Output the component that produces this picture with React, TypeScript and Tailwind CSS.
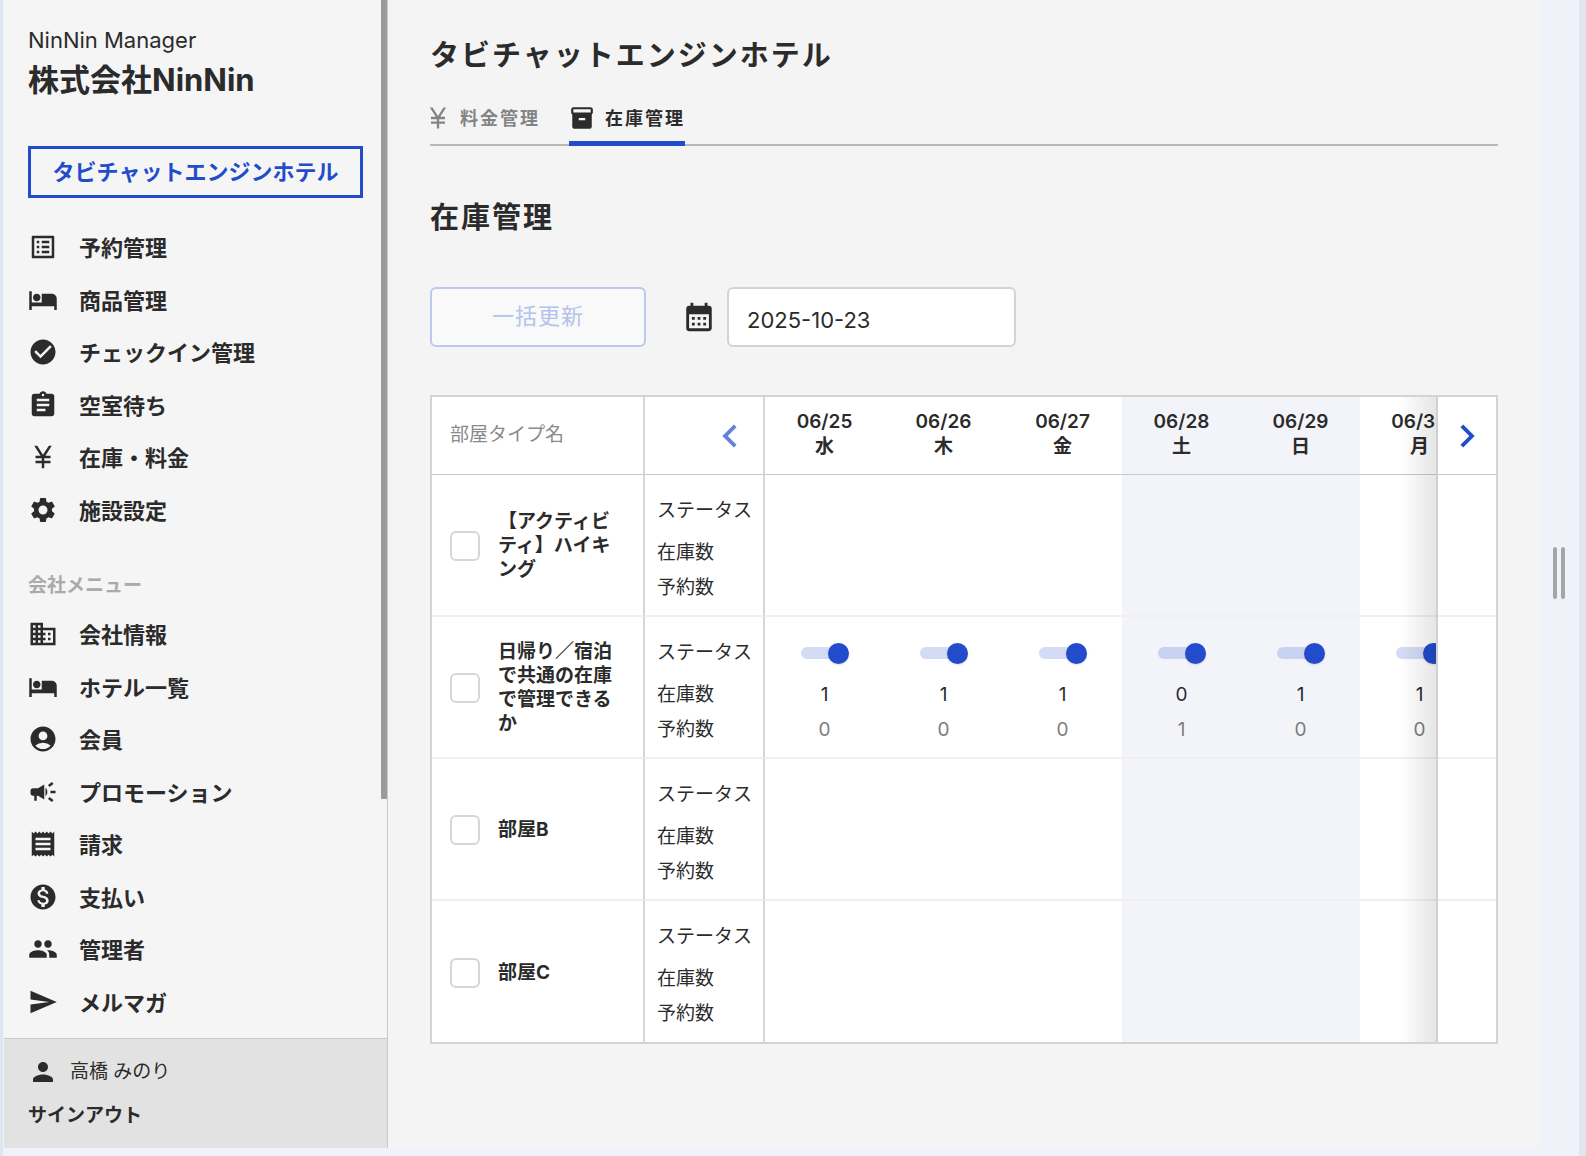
import React, { useState } from 'react';
import type { IconType } from 'react-icons';
import {
  MdListAlt,
  MdHotel,
  MdCheckCircle,
  MdAssignment,
  MdCurrencyYen,
  MdSettings,
  MdBusiness,
  MdAccountCircle,
  MdCampaign,
  MdReceipt,
  MdMonetizationOn,
  MdPeople,
  MdSend,
  MdPerson,
  MdInventory2,
  MdCalendarMonth,
  MdChevronLeft,
  MdChevronRight,
} from 'react-icons/md';

type MenuItem = { label: string; icon: IconType };

type Day = { date: string; weekday: string; weekend?: boolean };

type Stock = { open: boolean; stock: number; reserved: number };

type Room = { id: string; name: string; days?: Stock[] };

const hotelMenu: MenuItem[] = [
  { label: '予約管理', icon: MdListAlt },
  { label: '商品管理', icon: MdHotel },
  { label: 'チェックイン管理', icon: MdCheckCircle },
  { label: '空室待ち', icon: MdAssignment },
  { label: '在庫・料金', icon: MdCurrencyYen },
  { label: '施設設定', icon: MdSettings },
];

const companyMenu: MenuItem[] = [
  { label: '会社情報', icon: MdBusiness },
  { label: 'ホテル一覧', icon: MdHotel },
  { label: '会員', icon: MdAccountCircle },
  { label: 'プロモーション', icon: MdCampaign },
  { label: '請求', icon: MdReceipt },
  { label: '支払い', icon: MdMonetizationOn },
  { label: '管理者', icon: MdPeople },
  { label: 'メルマガ', icon: MdSend },
];

const days: Day[] = [
  { date: '06/25', weekday: '水' },
  { date: '06/26', weekday: '木' },
  { date: '06/27', weekday: '金' },
  { date: '06/28', weekday: '土', weekend: true },
  { date: '06/29', weekday: '日', weekend: true },
  { date: '06/30', weekday: '月' },
];

const rooms: Room[] = [
  { id: 'hiking', name: '【アクティビティ】ハイキング' },
  {
    id: 'shared',
    name: '日帰り／宿泊で共通の在庫で管理できるか',
    days: [
      { open: true, stock: 1, reserved: 0 },
      { open: true, stock: 1, reserved: 0 },
      { open: true, stock: 1, reserved: 0 },
      { open: true, stock: 0, reserved: 1 },
      { open: true, stock: 1, reserved: 0 },
      { open: true, stock: 1, reserved: 0 },
    ],
  },
  { id: 'room-b', name: '部屋B' },
  { id: 'room-c', name: '部屋C' },
];

const MenuLink = ({ label, icon: Icon }: MenuItem) => (
  <li className="flex items-center">
    <a href="#" className="flex items-center gap-[21px] text-[22px] leading-8 font-bold">
      <Icon size={30} className="shrink-0" />
      <span className="pt-0.5">{label}</span>
    </a>
  </li>
);

const StatusSwitch = ({ label, defaultOn }: { label: string; defaultOn: boolean }) => {
  const [on, setOn] = useState(defaultOn);

  return (
    <label className="relative inline-flex h-[21px] w-12 items-center align-middle cursor-pointer">
      <input
        type="checkbox"
        role="switch"
        aria-label={label}
        checked={on}
        onChange={() => setOn(!on)}
        className="peer sr-only"
      />
      <span className="h-3 w-full rounded-full bg-gray-300 peer-checked:bg-[#224ccc]/20"></span>
      <span className="absolute left-0 size-[21px] rounded-full bg-white shadow-sm peer-checked:left-auto peer-checked:right-0 peer-checked:bg-[#224ccc]"></span>
    </label>
  );
};

const Sidebar = () => (
  <aside className="flex w-96 shrink-0 flex-col border-r border-[#c9c9c9] bg-[#f5f5f5]">
    <div className="relative flex-1 min-h-0 overflow-hidden px-6 pt-[26px]">
      <p className="text-[22px] leading-7">NinNin Manager</p>
      <p className="mt-1.5 text-[31px] leading-10 font-bold">株式会社NinNin</p>

      <button className="mt-[46px] block h-[52px] w-[335px] border-3 border-[#224ccc] text-[22px] leading-8 font-bold text-[#224ccc]">
        タビチャットエンジンホテル
      </button>

      <ul className="mt-[23px] grid h-[315px] grid-rows-6">
        {hotelMenu.map(item => <MenuLink key={item.label} {...item} />)}
      </ul>

      <p className="mt-[34px] text-[19px] leading-8 font-bold text-[#aaaaaa]">会社メニュー</p>
      <ul className="mt-1.5 grid h-[420px] grid-rows-8">
        {companyMenu.map(item => <MenuLink key={item.label} {...item} />)}
      </ul>

      {/* Scroll thumb */}
      <div className="absolute top-0 right-0 h-[77%] w-1.5 bg-[#9b9b9b]"></div>
    </div>

    <div className="shrink-0 border-t border-[#c9c9c9] bg-[#e2e2e2] px-6 pt-[17px] pb-4">
      <p className="flex items-center gap-3 text-[19px] leading-8">
        <MdPerson size={30} />
        高橋 みのり
      </p>
      <button className="mt-3 block text-[19px] leading-8 font-bold">サインアウト</button>
    </div>
  </aside>
);

const Tabs = () => (
  <nav className="mt-3.5 border-b-2 border-[#b8b8b8]">
    <div className="-mb-0.5 -ml-1.5 flex gap-[29px] text-[18px] font-bold tracking-[2px]">
      <a href="#" className="flex h-14 items-center gap-2.5 border-b-5 border-transparent pt-[5px] text-[#848484]">
        <MdCurrencyYen size={28} className="-mr-0.5" />
        料金管理
      </a>
      <a href="#" aria-current="page" className="flex h-14 items-center gap-2.5 border-b-5 border-[#224ccc] pt-[5px]">
        <MdInventory2 size={26} />
        在庫管理
      </a>
    </div>
  </nav>
);

const RoomRow = ({ room, last }: { room: Room; last: boolean }) => {
  const line = last ? 'border-b-0' : 'border-b-2 border-b-[#f0f0f0]';

  return (
    <tr className={last ? 'h-[141px]' : 'h-[142px]'}>
      <th scope="row" className={`border-r-2 border-r-[#d6d6d6] px-[18px] pt-0.5 text-left font-bold ${line}`}>
        <label className="flex items-center gap-[18px] leading-6">
          <input
            type="checkbox"
            className="size-[30px] shrink-0 appearance-none rounded-md border-2 border-[#d6d6d6] bg-white checked:border-[#224ccc] checked:bg-[#224ccc]"
          />
          {room.name}
        </label>
      </th>
      <td className={`border-r-2 border-r-[#d6d6d6] pt-4 pl-3 align-top ${line}`}>
        <p className="mb-1 leading-10">ステータス</p>
        <p className="leading-[35px]">在庫数</p>
        <p className="leading-[35px]">予約数</p>
      </td>
      {days.map((day, i) => {
        const cell = room.days?.[i];
        return (
          <td key={day.date} className={`pt-4 text-center align-top ${line} ${day.weekend ? 'bg-[#f3f4fa]' : ''}`}>
            {cell && (
              <>
                <div className="mb-1 flex h-10 items-center justify-center">
                  <StatusSwitch label={`${room.name} ${day.date}`} defaultOn={cell.open} />
                </div>
                <p className="leading-[35px]">{cell.stock}</p>
                <p className="leading-[35px] text-[#7d7d7d]">{cell.reserved}</p>
              </>
            )}
          </td>
        );
      })}
    </tr>
  );
};

const StockTable = () => (
  <div className="mt-12 flex border-2 border-[#d3d3d3] bg-white">
    <div className="relative min-w-0 flex-1 overflow-hidden">
      <table className="w-[1047px] table-fixed border-separate border-spacing-0 text-[19px]">
        <colgroup>
          <col className="w-[213px]" />
          <col className="w-[120px]" />
          {days.map(day => <col key={day.date} className="w-[119px]" />)}
        </colgroup>
        <thead>
          <tr className="h-[78px]">
            <th scope="col" className="border-r-2 border-b border-r-[#d6d6d6] border-b-[#c9c9c9] px-[18px] text-left font-normal text-[#8a8a8a]">
              部屋タイプ名
            </th>
            <th className="border-r-2 border-b border-r-[#d6d6d6] border-b-[#c9c9c9]">
              <button aria-label="前へ" className="ml-auto mr-2.5 block text-[#224ccc]/70">
                <MdChevronLeft size={46} />
              </button>
            </th>
            {days.map(day => (
              <th
                key={day.date}
                scope="col"
                className={`border-b border-[#c9c9c9] pb-1 leading-[25px] ${day.weekend ? 'bg-[#f3f4fa]' : ''}`}
              >
                <span className="block font-semibold">{day.date}</span>
                <span className="block font-bold">{day.weekday}</span>
              </th>
            ))}
          </tr>
        </thead>
        <tbody>
          {rooms.map((room, i) => <RoomRow key={room.id} room={room} last={i === rooms.length - 1} />)}
        </tbody>
      </table>
      <div className="pointer-events-none absolute inset-y-0 right-0 w-9 bg-linear-to-r from-black/0 to-black/10"></div>
    </div>

    {/* Fixed column with the forward arrow */}
    <div className="flex w-[60px] shrink-0 flex-col border-l-2 border-[#d0d0d0]">
      <div className="flex h-[78px] items-center justify-center border-b border-[#c9c9c9]">
        <button aria-label="次へ" className="text-[#224ccc]">
          <MdChevronRight size={46} />
        </button>
      </div>
      {rooms.map(room => (
        <div key={room.id} className="h-[142px] border-b-2 border-[#f0f0f0] last:h-[141px] last:border-b-0"></div>
      ))}
    </div>
  </div>
);

const App: React.FC = () => {
  const [date, setDate] = useState('2025-10-23');

  return (
    <div
      lang="ja"
      className="flex h-screen border-r-[7px] border-l-3 border-[#dfe6ef] bg-[#eff3f9] pb-2 pl-px font-['Inter','Noto_Sans_CJK_JP',sans-serif] text-[#2b2b2b]"
    >
      <Sidebar />

      <main className="min-w-0 flex-1 overflow-hidden bg-[#f4f4f4] px-[42px] pt-9">
        <h1 className="text-[29px] leading-10 font-bold tracking-[2px]">タビチャットエンジンホテル</h1>
        <Tabs />

        <h2 className="mt-[52px] text-[29px] leading-10 font-bold tracking-[2px]">在庫管理</h2>

        <div className="mt-[49px] flex h-[60px] items-center">
          <button disabled className="h-full w-[216px] rounded-md border-2 border-[#bcc8ee] bg-[#f9f9f9] pb-0.5 text-[22px] tracking-[1px] text-[#b5c2ec]">
            一括更新
          </button>
          <MdCalendarMonth size={34} className="mr-[11px] ml-9" />
          <input
            type="text"
            aria-label="日付"
            value={date}
            onChange={e => setDate(e.target.value)}
            className="h-full w-[289px] rounded-md border-2 border-[#d3d3d3] bg-white px-[18px] pt-1.5 text-[22px]"
          />
        </div>

        <StockTable />
      </main>

      {/* Resize handle */}
      <div className="flex w-[39px] shrink-0 items-center justify-center gap-1 pr-0.5 pb-0.5">
        <span className="h-[52px] w-1 rounded-full bg-[#a6a6a6]"></span>
        <span className="h-[52px] w-1 rounded-full bg-[#a6a6a6]"></span>
      </div>
    </div>
  );
};

export default App;
